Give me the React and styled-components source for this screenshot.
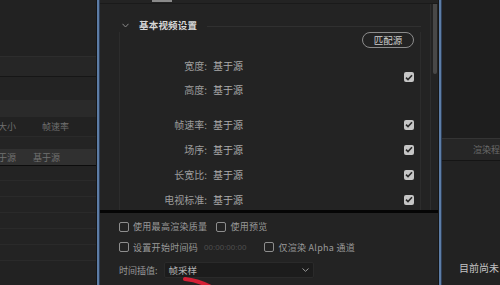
import styled, { createGlobalStyle } from "styled-components";

const GlobalStyle = createGlobalStyle`
  html, body {
    margin: 0;
    padding: 0;
    background: #1e1e1e;
  }
  body {
    font-family: "Noto Sans CJK SC", "Noto Sans", sans-serif;
  }
`;

const Screen = styled.div`
  width: 500px;
  height: 285px;
  display: flex;
  overflow: hidden;
  position: relative;
  background: #1e1e1e;
`;

const SidePanel = styled.div`
  width: ${(p) => p.width}px;
  flex: ${(p) => (p.width ? "none" : 1)};
  display: flex;
  flex-direction: column;
  background: #222;
  overflow: hidden;
`;

const Band = styled.div`
  height: ${(p) => p.h}px;
  flex: none;
  background: ${(p) => p.bg || "#232323"};
  border-bottom: ${(p) => (p.line ? `1px solid ${p.line}` : "none")};
  display: flex;
  align-items: center;
  font-size: 9px;
  color: ${(p) => p.color || "#6f6f6f"};
  white-space: nowrap;
`;

const Cell = styled.span`
  width: ${(p) => p.w}px;
  margin-left: ${(p) => p.ml || 0}px;
  flex: none;
`;

const Divider = styled.div`
  width: 4px;
  flex: none;
  background: linear-gradient(
    to right,
    #161616 0 1px,
    #5d7da6 1px 3px,
    #2d3e57 3px 4px
  );
`;

const Dialog = styled.div`
  width: 338px;
  flex: none;
  display: flex;
  flex-direction: column;
  background: #232323;
`;

const TopStrip = styled.div`
  height: 3px;
  flex: none;
  border-bottom: 1px solid #1a1a1a;
  padding-left: 52px;
`;

const Tab = styled.div`
  width: 20px;
  height: 2px;
  background: #8a8a8a;
`;

const ScrollArea = styled.div`
  flex: 1;
  display: flex;
  min-height: 0;
`;

const Content = styled.div`
  flex: 1;
  padding: 14px 9px 0 19px;
  overflow: hidden;
`;

const Track = styled.div`
  width: 8px;
  flex: none;
  border-left: 1px solid #2e2e2e;
  padding: 0 1px 0 2px;
  box-sizing: border-box;
`;

const Thumb = styled.div`
  height: 70px;
  background: #484848;
  border-radius: 0 0 3px 3px;
`;

const SectionHead = styled.div`
  height: 14px;
  display: flex;
  align-items: center;
`;

const Chevron = styled.svg`
  width: 7px;
  height: 5px;
  margin: 0 10px 0 3px;
`;

const Title = styled.span`
  font-size: 9.5px;
  font-weight: 700;
  color: #d6d6d6;
  letter-spacing: 0.2px;
`;

const HeadLine = styled.div`
  flex: 1;
  height: 1px;
  background: #303030;
  margin-left: 10px;
  margin-top: 2px;
`;

const SectionBody = styled.div`
  border-left: 1px solid #2c2c2c;
  border-right: 1px solid #2c2c2c;
  height: 200px;
  padding-right: 6px;
`;

const ButtonRow = styled.div`
  display: flex;
  justify-content: flex-end;
`;

const PillButton = styled.div`
  width: 50px;
  height: 14px;
  border: 1px solid #8c8c8c;
  border-radius: 8px;
  font-size: 9.5px;
  color: #cfcfcf;
  display: flex;
  align-items: center;
  justify-content: center;
`;

const Group = styled.div`
  display: grid;
  grid-template-columns: 1fr 10px;
  align-items: center;
  margin-top: ${(p) => p.mt || 0}px;
`;

const Rows = styled.div`
  display: flex;
  flex-direction: column;
`;

const Row = styled.div`
  height: ${(p) => p.h}px;
  display: grid;
  grid-template-columns: 87px 1fr;
  column-gap: 6px;
  align-items: center;
  font-size: 10px;
`;

const Label = styled.span`
  text-align: right;
  color: #9c9c9c;
`;

const Value = styled.span`
  color: #ababab;
`;

const CheckBox = styled.div`
  width: 10px;
  height: 10px;
  border-radius: 2px;
  box-sizing: border-box;
  background: ${(p) => (p.checked ? "#c6c6c6" : "transparent")};
  border: ${(p) => (p.checked ? "none" : "1px solid #8e8e8e")};
  display: flex;
  align-items: center;
  justify-content: center;
  flex: none;
`;

const BlackRule = styled.div`
  height: 3px;
  flex: none;
  background: #050505;
`;

const Options = styled.div`
  height: 72px;
  box-sizing: border-box;
  flex: none;
  padding: 4px 0 0 19px;
  display: flex;
  flex-direction: column;
  background: #232323;
`;

const OptRow = styled.div`
  height: ${(p) => p.h}px;
  display: flex;
  align-items: center;
  font-size: 9px;
  color: #9a9a9a;
  white-space: nowrap;
`;

const Opt = styled.label`
  display: flex;
  align-items: center;
  gap: 4px;
  margin-left: ${(p) => p.ml || 0}px;
  margin-right: ${(p) => p.mr || 0}px;
  letter-spacing: 0.3px;
`;

const Timecode = styled.span`
  color: #4f4f4f;
  font-family: "Liberation Sans", sans-serif;
  font-size: 8px;
  margin-left: 6px;
`;

const Select = styled.div`
  width: 150px;
  height: 16px;
  margin-left: 6px;
  box-sizing: border-box;
  background: #1c1c1c;
  border: 1px solid #2a2a2a;
  border-radius: 2px;
  display: flex;
  align-items: center;
  justify-content: space-between;
  padding: 0 4px;
  color: #b4b4b4;
  font-size: 9.5px;
`;

const RightText = styled.span`
  padding-left: 17px;
  font-size: 10px;
  color: #c4c4c4;
`;

const Filler = styled.div`
  flex: 1;
  background: #222;
`;

const Mark = styled.svg`
  position: absolute;
  left: 181px;
  top: 276px;
  width: 34px;
  height: 12px;
`;

const Check = ({ checked }) => (
  <CheckBox checked={checked}>
    {checked && (
      <svg width="8" height="7" viewBox="0 0 8 7">
        <path d="M1 3.6 L3 5.6 L7 1.2" fill="none" stroke="#2a2a2a" strokeWidth="1.6" />
      </svg>
    )}
  </CheckBox>
);

const Down = () => (
  <svg width="7" height="4" viewBox="0 0 7 4">
    <path d="M0.5 0.5 L3.5 3.3 L6.5 0.5" fill="none" stroke="#9a9a9a" strokeWidth="1" />
  </svg>
);

const settings = [
  ["帧速率:", "基于源"],
  ["场序:", "基于源"],
  ["长宽比:", "基于源"],
  ["电视标准:", "基于源"],
];

export default function App() {
  return (
    <>
      <GlobalStyle />
      <Screen>
        <SidePanel width={96}>
          <Band h={56} bg="#222" line="#2d2d2d" />
          <Band h={19} bg="#262626" line="#161616" />
          <Band h={23} bg="#232323" />
          <Band h={17} bg="#2a2a2a" />
          <Band h={19} bg="#222" line="#2a2a2a">
            <Cell w={44} ml={-2}>大小</Cell>
            <Cell w={40}>帧速率</Cell>
          </Band>
          <Band h={12} bg="#242424" />
          <Band h={16} bg="#303030" line="#0c0c0c" color="#727272">
            <Cell w={44} ml={-11}>基于源</Cell>
            <Cell w={40}>基于源</Cell>
          </Band>
          <Band h={14} bg="#232323" line="#2a2a2a" />
          <Band h={15} bg="#232323" line="#2a2a2a" />
          <Band h={15} bg="#232323" line="#2a2a2a" />
          <Band h={15} bg="#232323" line="#2a2a2a" />
          <Band h={15} bg="#232323" line="#2a2a2a" />
          <Band h={15} bg="#232323" line="#2a2a2a" />
          <Filler />
        </SidePanel>
        <Divider />
        <Dialog>
          <TopStrip>
            <Tab />
          </TopStrip>
          <ScrollArea>
            <Content>
              <SectionHead>
                <Chevron viewBox="0 0 7 5">
                  <path d="M0.5 0.8 L3.5 4 L6.5 0.8" fill="none" stroke="#8a8a8a" strokeWidth="1" />
                </Chevron>
                <Title>基本视频设置</Title>
                <HeadLine />
              </SectionHead>
              <SectionBody>
                <ButtonRow>
                  <PillButton>匹配源</PillButton>
                </ButtonRow>
                <Group mt={5}>
                  <Rows>
                    <Row h={24}>
                      <Label>宽度:</Label>
                      <Value>基于源</Value>
                    </Row>
                    <Row h={24}>
                      <Label>高度:</Label>
                      <Value>基于源</Value>
                    </Row>
                  </Rows>
                  <Check checked />
                </Group>
                {settings.map(([label, value], i) => (
                  <Group key={label} mt={i === 0 ? 11 : 0}>
                    <Row h={25}>
                      <Label>{label}</Label>
                      <Value>{value}</Value>
                    </Row>
                    <Check checked />
                  </Group>
                ))}
              </SectionBody>
            </Content>
            <Track>
              <Thumb />
            </Track>
          </ScrollArea>
          <BlackRule />
          <Options>
            <OptRow h={19}>
              <Opt mr={9}>
                <Check />
                使用最高渲染质量
              </Opt>
              <Opt>
                <Check />
                使用预览
              </Opt>
            </OptRow>
            <OptRow h={22}>
              <Opt>
                <Check />
                设置开始时间码
              </Opt>
              <Timecode>00:00:00:00</Timecode>
              <Opt ml={18}>
                <Check />
                仅渲染 Alpha 通道
              </Opt>
            </OptRow>
            <OptRow h={24}>
              <span>时间插值:</span>
              <Select>
                <span>帧采样</span>
                <Down />
              </Select>
            </OptRow>
          </Options>
        </Dialog>
        <Divider />
        <SidePanel>
          <Band h={138} bg="#1e1e1e" line="#343434" />
          <Band h={21} bg="#262626" line="#151515" color="#6a6a6a">
            <Cell w={60} ml={31}>渲染程序</Cell>
          </Band>
          <Band h={98} bg="#222" />
          <Band h={16} bg="#222" color="#c4c4c4">
            <RightText>目前尚未</RightText>
          </Band>
          <Filler />
        </SidePanel>
        <Mark viewBox="0 0 34 12">
          <path d="M4 3 Q16 4 30 11" fill="none" stroke="#d41f35" strokeWidth="4" strokeLinecap="round" />
        </Mark>
      </Screen>
    </>
  );
}
